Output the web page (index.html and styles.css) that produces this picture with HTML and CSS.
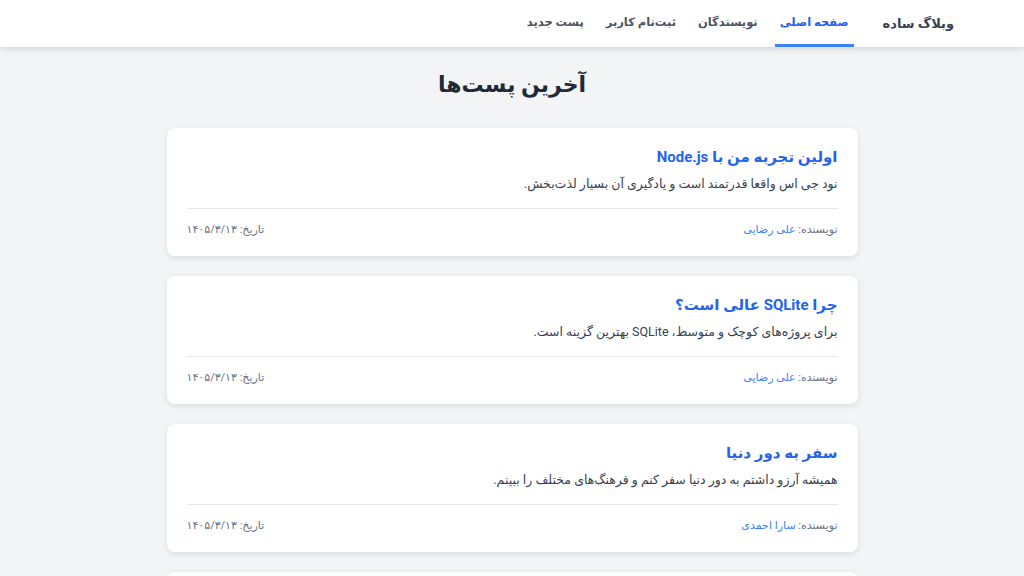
FILE: index.html
```html
<!DOCTYPE html>
<html lang="fa" dir="rtl">
<head>
    <meta charset="UTF-8">
    <meta name="viewport" content="width=device-width, initial-scale=1.0">
    <title>وبلاگ ساده</title>
    <link rel="stylesheet" href="styles.css">
</head>
<body>
    <header class="site-header">
        <nav class="nav">
            <a class="brand" href="#">وبلاگ ساده</a>
            <a class="nav-link active" href="#">صفحه اصلی</a>
            <a class="nav-link" href="#">نویسندگان</a>
            <a class="nav-link" href="#">ثبت‌نام کاربر</a>
            <a class="nav-link" href="#">پست جدید</a>
        </nav>
    </header>

    <main class="container">
        <h1 class="page-title">آخرین پست‌ها</h1>

        <article class="post">
            <div class="post-body">
                <h2 class="post-title"><a href="#">اولین تجربه من با Node.js</a></h2>
                <p class="post-text">نود جی اس واقعا قدرتمند است و یادگیری آن بسیار لذت‌بخش.</p>
            </div>
            <div class="post-meta">
                <span>نویسنده: <a href="#">علی رضایی</a></span>
                <span>تاریخ: ۱۴۰۵/۳/۱۳</span>
            </div>
        </article>

        <article class="post">
            <div class="post-body">
                <h2 class="post-title"><a href="#">چرا SQLite عالی است؟</a></h2>
                <p class="post-text">برای پروژه‌های کوچک و متوسط، SQLite بهترین گزینه است.</p>
            </div>
            <div class="post-meta">
                <span>نویسنده: <a href="#">علی رضایی</a></span>
                <span>تاریخ: ۱۴۰۵/۳/۱۳</span>
            </div>
        </article>

        <article class="post">
            <div class="post-body">
                <h2 class="post-title"><a href="#">سفر به دور دنیا</a></h2>
                <p class="post-text">همیشه آرزو داشتم به دور دنیا سفر کنم و فرهنگ‌های مختلف را ببینم.</p>
            </div>
            <div class="post-meta">
                <span>نویسنده: <a href="#">سارا احمدی</a></span>
                <span>تاریخ: ۱۴۰۵/۳/۱۳</span>
            </div>
        </article>

        <article class="post"></article>
    </main>
</body>
</html>
```

FILE: styles.css
```css
* {
    box-sizing: border-box;
}

body {
    margin: 0;
    background-color: #f3f4f6;
    font-family: Roboto, "DejaVu Sans", sans-serif;
    color: #374151;
}

a {
    text-decoration: none;
}

.site-header {
    background-color: #fff;
    height: 47px;
    box-shadow: 0 2px 6px rgba(0, 0, 0, 0.12);
}

.nav {
    max-width: 884px;
    height: 47px;
    margin: 0 auto;
    display: flex;
    align-items: stretch;
    gap: 12px;
}

.brand {
    display: flex;
    align-items: center;
    margin-left: 17px;
    font-size: 13px;
    font-weight: bold;
    color: #374151;
}

.nav-link {
    display: flex;
    align-items: center;
    padding: 0 5px;
    font-size: 11.5px;
    font-weight: 600;
    color: #4b5563;
    border-bottom: 3px solid transparent;
}

.nav-link.active {
    color: #2563eb;
    border-bottom-color: #3b82f6;
}

.container {
    max-width: 691px;
    margin: 0 auto;
    padding-top: 22px;
}

.page-title {
    margin: 0 0 27px;
    text-align: center;
    font-size: 22px;
    line-height: 32px;
    color: #1f2937;
}

.post {
    background-color: #fff;
    border-radius: 8px;
    box-shadow: 0 2px 6px rgba(0, 0, 0, 0.1);
    padding: 18px 20px 17px;
    margin-bottom: 20px;
    min-height: 128px;
}

.post-body {
    padding-bottom: 13px;
    border-bottom: 1px solid #e5e7eb;
}

.post-title {
    margin: 0 0 5px;
    font-size: 15px;
    line-height: 22px;
}

.post-title a {
    color: #2563eb;
}

.post-text {
    margin: 0;
    font-size: 12.5px;
    line-height: 22px;
    color: #374151;
}

.post-meta {
    display: flex;
    justify-content: space-between;
    padding-top: 12px;
    font-size: 11px;
    line-height: 18px;
    color: #6b7280;
}

.post-meta a {
    color: #3b82f6;
}
```
